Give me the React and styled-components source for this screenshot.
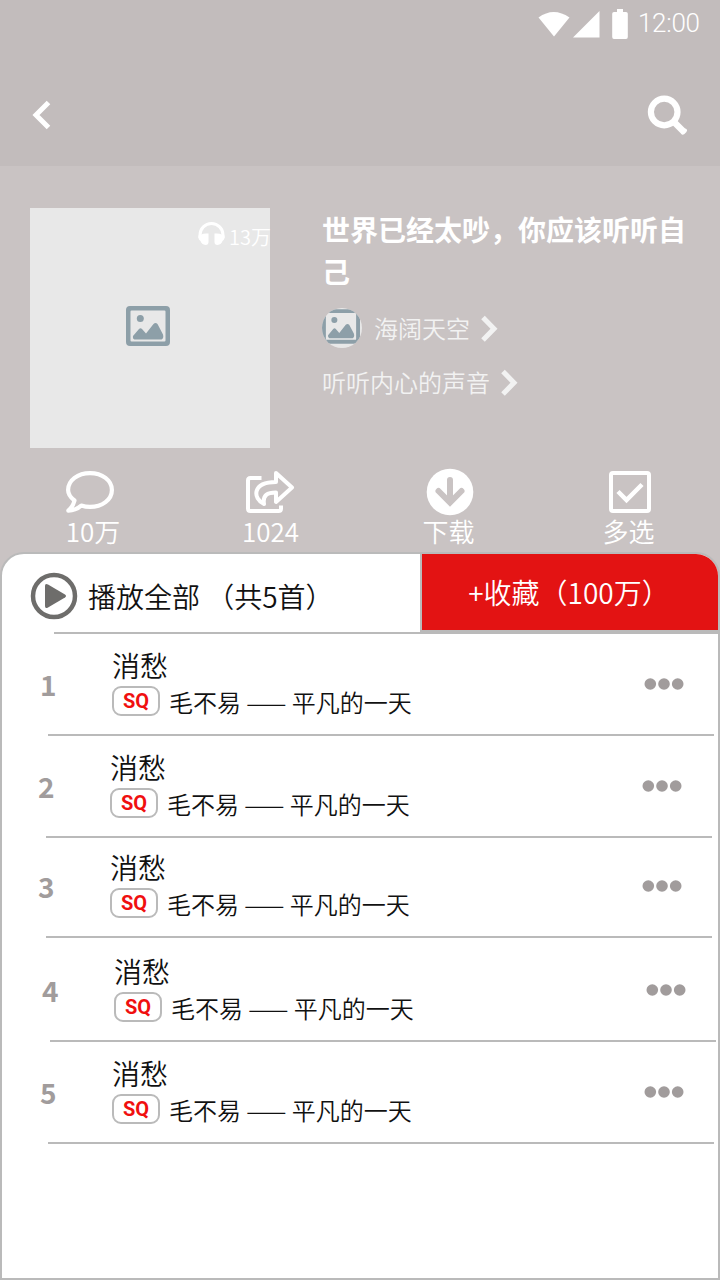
import React from "react";
import styled, { createGlobalStyle } from "styled-components";

const GlobalStyle = createGlobalStyle`
  *, *::before, *::after { box-sizing: border-box; }
  body {
    margin: 0;
    font-family: "Noto Sans CJK SC", sans-serif;
    font-weight: 350;
    color: #111;
  }
`;

const Page = styled.main`
  display: flex;
  flex-direction: column;
  width: 720px;
  height: 1280px;
  overflow: hidden;
  background: #c9c3c3;
`;

const Header = styled.header`
  flex: none;
  height: 166px;
  background: #c2bcbc;
`;

const StatusBar = styled.div`
  display: flex;
  justify-content: flex-end;
  align-items: center;
  height: 46px;
  padding-right: 20px;
  color: #fff;
`;

const Clock = styled.time`
  width: 62px;
  margin-left: 10px;
  font: 350 26px/46px Roboto, sans-serif;
  letter-spacing: -0.3px;
  white-space: nowrap;
`;

const NavBar = styled.nav`
  display: flex;
  justify-content: space-between;
  align-items: center;
  height: 120px;
  padding: 18px 31px 0 32px;
`;

const IconButton = styled.button`
  display: flex;
  padding: 0;
  border: 0;
  background: none;
`;

const Icon = styled.svg`
  display: block;
  flex: none;
  overflow: visible;
`;

const Hero = styled.section`
  display: flex;
  flex: none;
  gap: 52px;
  height: 282px;
  padding: 42px 30px 0;
`;

const Cover = styled.div`
  position: relative;
  display: flex;
  flex: none;
  align-items: center;
  justify-content: center;
  width: 240px;
  height: 240px;
  padding: 0 4px 4px 0;
  background: #e8e8e8;
`;

const PlayCount = styled.div`
  position: absolute;
  top: 14px;
  right: -1px;
  display: flex;
  gap: 4px;
  color: #fff;
  font-size: 20px;
  line-height: 30px;
  white-space: nowrap;
`;

const Info = styled.div`
  width: 368px;
`;

const Title = styled.h1`
  margin: 0;
  color: #fff;
  font-size: 28px;
  font-weight: 700;
  line-height: 42px;
`;

const InfoLine = styled.div`
  display: flex;
  align-items: center;
  gap: ${(p) => p.$gap}px;
  height: 40px;
  margin-top: ${(p) => p.$top}px;
  color: #f2f2f2;
  font-size: 24px;
  line-height: 40px;
`;

const Avatar = styled.div`
  display: flex;
  justify-content: center;
  width: 40px;
  height: 40px;
  margin-right: 3px;
  padding-top: 1px;
  padding-right: 2px;
  border-radius: 50%;
  overflow: hidden;
  background: #e8e8e8;
`;

const Actions = styled.section`
  display: grid;
  grid-template-columns: repeat(4, 180px);
  flex: none;
  height: 104px;
  padding-top: 18px;
`;

const Action = styled.div`
  display: flex;
  flex-direction: column;
  align-items: center;
`;

const ActionLabel = styled.span`
  padding-left: ${(p) => p.$indent || 0}px;
  padding-right: ${(p) => p.$outdent || 0}px;
  color: #fff;
  font-size: 26px;
  line-height: 34px;
`;

const Panel = styled.section`
  flex: 1;
  border: 2px solid #bababa;
  border-radius: 24px 24px 0 0;
  background: #fff;
  overflow: hidden;
`;

const PanelHeader = styled.div`
  display: flex;
  height: 78px;
`;

const PlayAll = styled.div`
  display: flex;
  flex: 1;
  align-items: center;
  gap: 10px;
  padding: 6px 0 0 28px;
  font-size: 28px;
  line-height: 40px;
`;

const CollectButton = styled.button`
  width: 298px;
  height: 78px;
  padding: 0 2px 0 0;
  border: 0 solid #bababa;
  border-width: 0 0 2px 2px;
  background: #e31313;
  color: #fff;
  font: inherit;
  font-size: 28px;
  line-height: 76px;
`;

const HeaderRule = styled.div`
  height: 2px;
  margin-left: 52px;
  background: #bababa;
`;

const Track = styled.article`
  display: flex;
  flex-direction: column;
  justify-content: flex-end;
  width: 674px;
  height: ${(p) => p.$height}px;
  margin-left: ${(p) => p.$left}px;
`;

const TrackBody = styled.div`
  display: flex;
  align-items: center;
  height: 98px;
  padding-bottom: 3px;
`;

const TrackRule = styled.div`
  height: 2px;
  margin-left: 8px;
  background: #bababa;
`;

const TrackNumber = styled.span`
  width: 72px;
  padding-top: 1px;
  color: #a19c9c;
  font-size: 28px;
  font-weight: 700;
  line-height: 40px;
`;

const TrackText = styled.div`
  flex: 1;
  padding-bottom: 7px;
`;

const TrackName = styled.div`
  font-size: 28px;
  line-height: 40px;
  padding-bottom: 1px;
`;

const TrackMeta = styled.div`
  display: flex;
  align-items: center;
  gap: 9px;
  height: 30px;
  font-size: 24px;
  line-height: 34px;
`;

const Quality = styled.span`
  display: flex;
  align-items: center;
  justify-content: center;
  width: 48px;
  height: 30px;
  border: 2px solid #bababa;
  border-radius: 9px;
  color: #f00f0f;
  font: 700 20px/26px Roboto, sans-serif;
`;

const MetaText = styled.span`
  padding-top: 2px;
`;

const MoreButton = styled(IconButton)`
  margin-right: 30px;
`;

const PictureIcon = ({ width, height }) => (
  <Icon width={width} height={height} viewBox="0 0 44 40" fill="#8d9fa8">
    <path fillRule="evenodd" d="M4 0h36a4 4 0 0 1 4 4v32a4 4 0 0 1-4 4H4a4 4 0 0 1-4-4V4a4 4 0 0 1 4-4zm1.500 4.400a1 1 0 0 0-1 1v29a1 1 0 0 0 1 1h33a1 1 0 0 0 1-1v-29a1 1 0 0 0-1-1z" />
    <circle cx="14.300" cy="12.500" r="3.500" />
    <path d="M8.500 33.500q-2-.5-1.500-3.500l6-7q1.500-1.700 3 0l4 4.500 7.500-9.500q2-2 4 0l5.500 10.500q1 4-1.500 5z" />
  </Icon>
);

const ChevronRight = () => (
  <Icon width="20" height="28" viewBox="0 0 20 28" fill="none" stroke="currentColor" strokeWidth="5">
    <path d="M4 3.500l11 11.200L4 26" />
  </Icon>
);

const CommentIcon = () => (
  <Icon width="52" height="48" viewBox="0 0 52 48" fill="none" stroke="#fff" strokeWidth="4.200" strokeLinejoin="round">
    <path d="M10.500 34.500C6.500 31.500 4.100 28 4.100 24 4.100 14.200 13.900 7.100 26 7.100s21.900 7.100 21.900 16.900S38.100 40.900 26 40.900c-3.200 0-6-.5-8.700-1.400-3.500 3.300-7.100 4.800-13 5.200 3.300-2.800 5.200-6 6.200-10.200z" />
  </Icon>
);

const ShareIcon = () => (
  <Icon width="52" height="48" viewBox="0 0 52 48" fill="none" stroke="#fff" strokeWidth="4" strokeLinecap="round" strokeLinejoin="round">
    <path d="M17.500 12H6.500q-2.500 0-2.500 2.500V42.500q0 2.500 2.500 2.500H34.500q2.500 0 2.500-2.500V39.500" strokeLinecap="butt" />
    <path d="M32 7L48 21.500 32 36V26.500C23.500 26.500 18.500 29 20 38C8.500 32.500 8 16 32 16z" />
  </Icon>
);

const DownloadIcon = () => (
  <Icon width="52" height="48" viewBox="0 0 52 48">
    <circle cx="26" cy="26" r="23.300" fill="#fff" />
    <path d="M26 14v21M14.500 25L26 36.500 37.500 25" fill="none" stroke="#c9c3c3" strokeWidth="6" strokeLinecap="round" />
  </Icon>
);

const CheckIcon = () => (
  <Icon width="52" height="48" viewBox="0 0 52 48" fill="none" stroke="#fff">
    <rect x="7" y="7" width="38" height="38" rx="2" strokeWidth="4" />
    <path d="M14 25.500l8.500 8.500L38 18.500" strokeWidth="4.500" />
  </Icon>
);

const actions = [
  { label: "10万", icon: <CommentIcon />, indent: 6 },
  { label: "1024", icon: <ShareIcon />, indent: 1 },
  { label: "下载", icon: <DownloadIcon />, outdent: 3 },
  { label: "多选", icon: <CheckIcon />, outdent: 3 },
];

const tracks = [
  { left: 38, height: 102 },
  { left: 36, height: 102 },
  { left: 36, height: 100 },
  { left: 40, height: 104 },
  { left: 38, height: 102 },
];

export default function App() {
  return (
    <>
      <GlobalStyle />
      <Page>
        <Header>
          <StatusBar>
            <Icon width="90" height="32" viewBox="538 7 90 32" fill="#fff">
              <path d="M538.500 17.500Q553.500 6.500 569.500 17.500L554 36.500z" />
              <path d="M573 37.500L599.500 11v26.500z" />
              <path d="M617 9h6v3h3q1.800 0 1.800 1.800V37q0 2-1.800 2h-12q-1.800 0-1.800-2V13.800q0-1.800 1.800-1.800h3z" />
            </Icon>
            <Clock>12:00</Clock>
          </StatusBar>
          <NavBar>
            <IconButton aria-label="返回">
              <Icon width="20" height="30" viewBox="0 0 20 30" fill="none" stroke="#fff" strokeWidth="5">
                <path d="M16.500 2.500L4 15l12.500 12.500" />
              </Icon>
            </IconButton>
            <IconButton aria-label="搜索">
              <Icon width="42" height="42" viewBox="0 0 42 42" fill="none" stroke="#fff">
                <circle cx="17.200" cy="18" r="13.300" strokeWidth="6.200" />
                <path d="M27.500 28.500L37.500 38.500" strokeWidth="6.500" />
                <path d="M36 38.500L38 36.500" strokeWidth="4" strokeLinecap="round" />
              </Icon>
            </IconButton>
          </NavBar>
        </Header>

        <Hero>
          <Cover>
            <PictureIcon width="44" height="40" />
            <PlayCount>
              <Icon width="27" height="27" viewBox="0 0 27 27">
                <path d="M2 16V13a11.500 11.500 0 0 1 23 0V16" fill="none" stroke="#fff" strokeWidth="3" />
                <path d="M10.500 11.500V20q0 3-3 3Q3.500 22.500 2.500 19 0 17.500.5 13.500L3.500 12.500Q5.500 11 10.500 11.500zM16.500 11.500V20q0 3 3 3 4-.5 5-4 2.500-1.500 2-5.500L23.500 12.500Q21.500 11 16.500 11.500z" fill="#fff" />
              </Icon>
              13万
            </PlayCount>
          </Cover>
          <Info>
            <Title>世界已经太吵，你应该听听自己</Title>
            <InfoLine $top={16} $gap={9}>
              <Avatar>
                <PictureIcon width="38" height="35" />
              </Avatar>
              海阔天空
              <ChevronRight />
            </InfoLine>
            <InfoLine $top={14} $gap={9}>
              听听内心的声音
              <ChevronRight />
            </InfoLine>
          </Info>
        </Hero>

        <Actions>
          {actions.map(({ label, icon, indent, outdent }) => (
            <Action key={label}>
              {icon}
              <ActionLabel $indent={indent} $outdent={outdent}>{label}</ActionLabel>
            </Action>
          ))}
        </Actions>

        <Panel>
          <PanelHeader>
            <PlayAll>
              <Icon width="48" height="48" viewBox="0 0 48 48">
                <circle cx="24" cy="24" r="21" fill="none" stroke="#6e6d6b" strokeWidth="4.500" />
                <path d="M15 14q0-3 3-1.500L35 22.500q2 1.500 0 3L18 35.500q-3 1.500-3-1.500z" fill="#6e6d6b" />
              </Icon>
              播放全部 （共5首）
            </PlayAll>
            <CollectButton>+收藏（100万）</CollectButton>
          </PanelHeader>
          <HeaderRule />
          {tracks.map(({ left, height }, i) => (
            <Track key={i} $left={left} $height={height}>
              <TrackBody>
                <TrackNumber>{i + 1}</TrackNumber>
                <TrackText>
                  <TrackName>消愁</TrackName>
                  <TrackMeta>
                    <Quality>SQ</Quality>
                    <MetaText>毛不易 —— 平凡的一天</MetaText>
                  </TrackMeta>
                </TrackText>
                <MoreButton aria-label="更多">
                  <Icon width="40" height="12" viewBox="0 0 40 12" fill="#a19c9c">
                    <circle cx="6.300" cy="6" r="5.800" />
                    <circle cx="20" cy="6" r="5.800" />
                    <circle cx="33.700" cy="6" r="5.800" />
                  </Icon>
                </MoreButton>
              </TrackBody>
              <TrackRule />
            </Track>
          ))}
        </Panel>
      </Page>
    </>
  );
}
